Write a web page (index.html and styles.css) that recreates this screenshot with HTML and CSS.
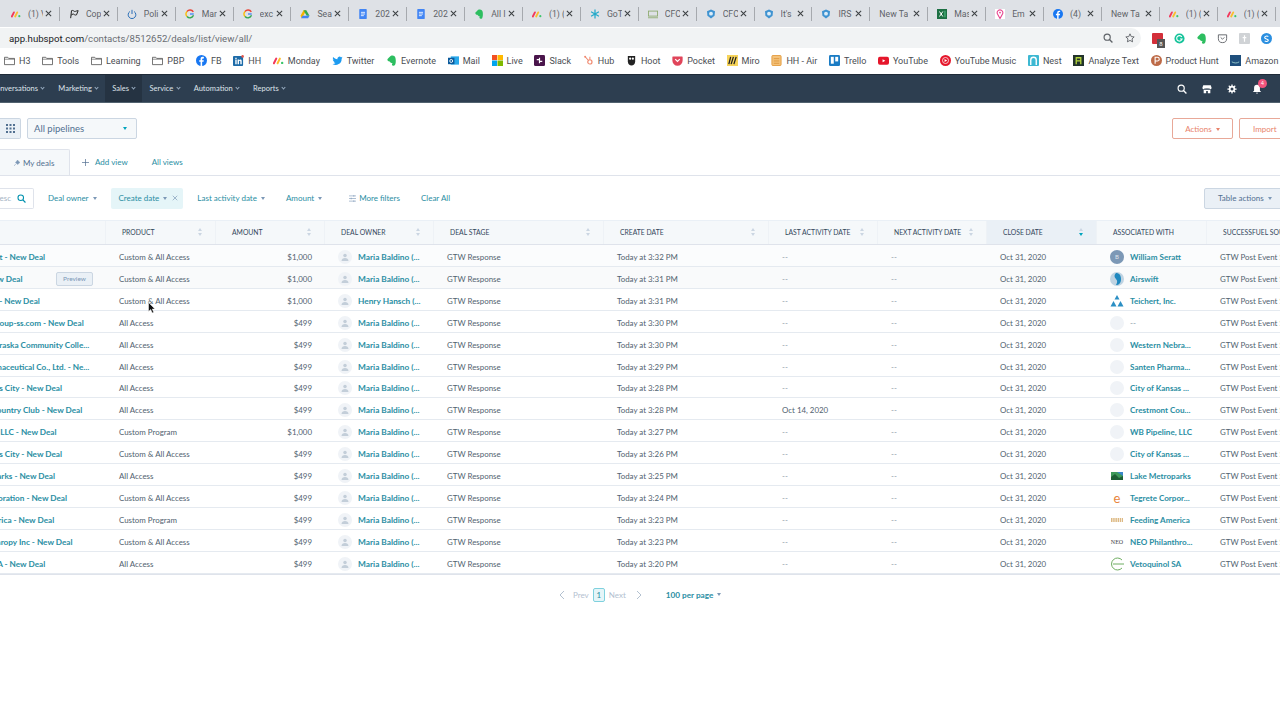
FILE: index.html
```html
<!DOCTYPE html>
<html lang="en">
<head>
    <meta charset="UTF-8">
    <title>Deals | HubSpot</title>
    <link rel="stylesheet" href="styles.css">
</head>
<body>
    <!-- shared icons -->
    <svg class="sprite" width="0" height="0">
        <symbol id="i-monday" viewBox="0 0 12 12"><path d="M1 9 3.5 4" stroke="#f2385c" stroke-width="2.2" stroke-linecap="round"/><path d="M5 9 7.5 4" stroke="#fcbe2c" stroke-width="2.2" stroke-linecap="round"/><circle cx="10" cy="8.6" r="1.3" fill="#3cc66b"/></symbol>
        <symbol id="i-flag" viewBox="0 0 12 12"><path d="M2 11 3 2c2-1 3 1 4 1s2-1 4-1L9 7C7 8 6 6 5 6S3 7 2.6 7.5" fill="none" stroke="#222" stroke-width="1.2"/></symbol>
        <symbol id="i-power" viewBox="0 0 12 12"><path d="M3.5 3a4.6 4.6 0 1 0 5 0M6 1v5" fill="none" stroke="#2b6fb8" stroke-width="1.2"/></symbol>
        <symbol id="i-google" viewBox="0 0 12 12"><path d="M10.5 6H6" stroke="#4285f4" stroke-width="1.6"/><path d="M10 3.4A4.6 4.6 0 0 0 2.4 3" fill="none" stroke="#ea4335" stroke-width="1.6"/><path d="M2.4 3a4.6 4.6 0 0 0 0 6" fill="none" stroke="#fbbc05" stroke-width="1.6"/><path d="M2.4 9a4.6 4.6 0 0 0 7.8-1.4" fill="none" stroke="#34a853" stroke-width="1.6"/></symbol>
        <symbol id="i-drive" viewBox="0 0 12 12"><path d="M4.2 1.5h3.4L4 8 2.2 11 .6 8z" fill="#f5b400"/><path d="M7.6 1.5 11.4 8H8L4.2 1.5z" fill="#34a853"/><path d="M3 8h8.4l-1.7 3H1.3z" fill="#4285f4"/></symbol>
        <symbol id="i-docs" viewBox="0 0 12 12"><rect x="1.5" width="9" height="12" rx="1" fill="#4285f4"/><path d="M3.5 4h5M3.5 6h5M3.5 8h3.5" stroke="#fff"/></symbol>
        <symbol id="i-evernote" viewBox="0 0 12 12"><path d="M3 3 5 1c3-1 5 0 5.5 3 .3 2.5.3 5-.7 7-1 1-3 .8-3.3-.4-.2-1 .8-1.6 1.5-1.2C6 9 4.5 8 4 7 2.5 7 1.5 6 1.5 4.5z" fill="#2dbe60"/></symbol>
        <symbol id="i-snow" viewBox="0 0 12 12"><path d="M6 .5v11M1.3 3.2l9.4 5.600M10.700 3.200l-9.400 5.600" stroke="#25a9c9" stroke-width="1.5"/></symbol>
        <symbol id="i-shield" viewBox="0 0 12 12"><path d="M6 .5 10.800 2.600 10.300 8 6 11.500 1.700 8 1.200 2.600z" fill="#3f93d1"/><circle cx="6" cy="5.600" r="2.300" fill="#dcedf8"/></symbol>
        <symbol id="i-cfo" viewBox="0 0 12 12"><rect x=".5" y="2.500" width="11" height="6" fill="none" stroke="#8aa86a"/><path d="M0 10.500h12" stroke="#8aa86a"/></symbol>
        <symbol id="i-excel" viewBox="0 0 12 12"><rect width="12" height="12" fill="#1d7044"/><path d="m3 3 4 6M7 3 3 9" stroke="#fff" stroke-width="1.2"/><path d="M8.500 2h2v8h-2z" fill="#3ea16d"/></symbol>
        <symbol id="i-pin" viewBox="0 0 12 12"><rect width="12" height="12" fill="#fff"/><path d="M6 11.500 3 6a3.400 3.400 0 1 1 6 0z" fill="none" stroke="#e8448f" stroke-width="1.3"/><circle cx="6" cy="4.300" r="1.100" fill="#e8448f"/></symbol>
        <symbol id="i-fb" viewBox="0 0 12 12"><circle cx="6" cy="6" r="6" fill="#1877f2"/><path d="M6.700 12V7.400h1.500l.3-1.700H6.700v-1c0-.6.300-1 1-1h.9V2.200C8 2.100 7.600 2 7.200 2 5.800 2 5 2.900 5 4.400v1.300H3.500v1.700H5V12z" fill="#fff"/></symbol>
        <symbol id="i-folder" viewBox="0 0 12 10"><path d="M.5 1.500h3.600l1 1.200h6.400v6.800H.5z" fill="none" stroke="#555" stroke-width=".9"/><path d="M.5 3.600h11" stroke="#555" stroke-width=".7"/></symbol>
        <symbol id="i-linkedin" viewBox="0 0 12 12"><rect width="11" height="11" y="1" rx="1" fill="#1d6ba8"/><path d="M2.500 5h1.500v5H2.500zM2.500 3h1.500v1.300H2.500zM5 5h1.500v.8c.8-1.200 3-1.200 3 .8V10H8V7c0-1-1.500-1-1.500 0v3H5z" fill="#fff"/><circle cx="10.500" cy="1.500" r="1.400" fill="#e2574c"/></symbol>
        <symbol id="i-twitter" viewBox="0 0 12 12"><path d="M11.500 2.800c-.4.200-.9.300-1.300.4.500-.3.800-.7 1-1.300-.4.300-.9.500-1.400.6a2.300 2.300 0 0 0-3.900 2.100C4 4.500 2.300 3.600 1.200 2.200c-.6 1-.3 2.300.7 3-.4 0-.7-.1-1-.3 0 1.100.8 2.100 1.800 2.300-.3.100-.7.100-1 0 .3.900 1.100 1.600 2.100 1.600A4.600 4.600 0 0 1 .5 9.800a6.500 6.500 0 0 0 10-5.800c.4-.3.800-.7 1-1.200z" fill="#1d9bf0"/></symbol>
        <symbol id="i-mail" viewBox="0 0 12 12"><rect x="3" y="1.500" width="9" height="9" fill="#28a8ea"/><rect y="3" width="7" height="7" fill="#0a5a9c"/><circle cx="3.500" cy="6.500" r="1.600" fill="none" stroke="#fff"/></symbol>
        <symbol id="i-live" viewBox="0 0 12 12"><rect width="5.500" height="5.500" fill="#f25022"/><rect x="6" width="6" height="5.500" fill="#ffb900"/><rect y="6" width="5.500" height="6" fill="#00a4ef"/><rect x="6" y="6" width="6" height="6" fill="#7fba00"/></symbol>
        <symbol id="i-slack" viewBox="0 0 12 12"><rect width="12" height="12" rx="1.500" fill="#4a154b"/><path d="M3 5h3M6 3v3M9 7H6M6 9V6" stroke="#fff" stroke-width="1.3"/></symbol>
        <symbol id="i-hub" viewBox="0 0 12 12"><circle cx="7.500" cy="7.500" r="2.300" fill="none" stroke="#f08a70" stroke-width="1.3"/><path d="M2.500 2 6 6M7.500 5V2" stroke="#f08a70" stroke-width="1.1"/><circle cx="2.300" cy="1.800" r="1.100" fill="#f08a70"/></symbol>
        <symbol id="i-hoot" viewBox="0 0 12 12"><path d="M2 1h8v6c0 3-2 4.500-4 4.500S2 10 2 7z" fill="#222"/><circle cx="4.500" cy="4" r="1.200" fill="#fff"/><circle cx="7.500" cy="4" r="1.200" fill="#fff"/></symbol>
        <symbol id="i-pocket" viewBox="0 0 12 12"><path d="M1 1.500h10a.6.600 0 0 1 .6.600V6a5.600 5.600 0 0 1-11.200 0V2.100a.6.600 0 0 1 .6-.6z" fill="#e0455a"/><path d="M3.500 4.500 6 7l2.500-2.500" fill="none" stroke="#fff" stroke-width="1.4"/></symbol>
        <symbol id="i-miro" viewBox="0 0 12 12"><rect width="12" height="12" fill="#f7d45a"/><path d="M4 2 2 10M7 2 4.500 10M10 2 7.500 10" stroke="#222" stroke-width="1.4"/></symbol>
        <symbol id="i-air" viewBox="0 0 12 12"><rect x="1" y=".5" width="10" height="11" rx="1" fill="#f4c27a" stroke="#e29a3c"/><path d="M3 4h6M3 6.500h6M3 9h6" stroke="#d98a2b" stroke-width=".8"/></symbol>
        <symbol id="i-trello" viewBox="0 0 12 12"><rect width="12" height="12" rx="1.500" fill="#1b7cc4"/><rect x="2" y="2" width="3.200" height="7.500" fill="#fff"/><rect x="6.800" y="2" width="3.200" height="5" fill="#fff"/></symbol>
        <symbol id="i-youtube" viewBox="0 0 12 12"><rect y="2" width="12" height="8.500" rx="2" fill="#e5162b"/><path d="M5 4.500v3.500l3-1.750z" fill="#fff"/></symbol>
        <symbol id="i-ytm" viewBox="0 0 12 12"><circle cx="6" cy="6" r="6" fill="#e5162b"/><circle cx="6" cy="6" r="3.300" fill="none" stroke="#fff" stroke-width=".8"/><path d="M5 4.300v3.400L7.800 6z" fill="#fff"/></symbol>
        <symbol id="i-nest" viewBox="0 0 12 12"><rect width="12" height="12" rx="1" fill="#3db8d2"/><path d="M3 11V5.500a3 3 0 0 1 6 0V11" fill="none" stroke="#fff" stroke-width="1.5"/></symbol>
        <symbol id="i-analyze" viewBox="0 0 12 12"><rect width="12" height="12" fill="#22332c"/><path d="M3.500 10V3h5v7M3.500 6.500h5" fill="none" stroke="#b5d63b" stroke-width="1.4"/></symbol>
        <symbol id="i-ph" viewBox="0 0 12 12"><circle cx="6" cy="6" r="6" fill="#bd6a47"/><path d="M4.500 9.500v-7H7a2 2 0 0 1 0 4H4.500" fill="none" stroke="#fff" stroke-width="1.2"/></symbol>
        <symbol id="i-amazon" viewBox="0 0 12 12"><rect width="12" height="12" fill="#1f4f7c"/><path d="M2 7.500c3 1.600 5.500 1.600 8 0" fill="none" stroke="#9cc" stroke-width="1"/></symbol>
        <symbol id="i-close" viewBox="0 0 8 8"><path d="m1 1 6 6M7 1 1 7" stroke="#3c4043" stroke-width="1.2"/></symbol>
        <symbol id="i-person" viewBox="0 0 16 16"><circle cx="8" cy="8" r="8" fill="#f0f3f7"/><circle cx="8" cy="6.300" r="2" fill="#c3ced9"/><path d="M4 12.500c0-2.500 1.800-3.500 4-3.500s4 1 4 3.500z" fill="#c3ced9"/></symbol>
        <symbol id="i-search" viewBox="0 0 12 12"><circle cx="5" cy="5" r="3.700" fill="none" stroke="currentColor" stroke-width="1.4"/><path d="m7.800 7.800 3.500 3.500" stroke="currentColor" stroke-width="1.6"/></symbol>
    </svg>

    <div class="tabstrip">
        <div class="tab"><svg class="tab-icon"><use href="#i-monday"/></svg><span class="tab-title">(1) V</span><svg class="tab-x"><use href="#i-close"/></svg></div>
        <div class="tab"><svg class="tab-icon"><use href="#i-flag"/></svg><span class="tab-title">Cop</span><svg class="tab-x"><use href="#i-close"/></svg></div>
        <div class="tab"><svg class="tab-icon"><use href="#i-power"/></svg><span class="tab-title">Poli</span><svg class="tab-x"><use href="#i-close"/></svg></div>
        <div class="tab"><svg class="tab-icon"><use href="#i-google"/></svg><span class="tab-title">Mar</span><svg class="tab-x"><use href="#i-close"/></svg></div>
        <div class="tab"><svg class="tab-icon"><use href="#i-google"/></svg><span class="tab-title">exc</span><svg class="tab-x"><use href="#i-close"/></svg></div>
        <div class="tab"><svg class="tab-icon"><use href="#i-drive"/></svg><span class="tab-title">Sea</span><svg class="tab-x"><use href="#i-close"/></svg></div>
        <div class="tab"><svg class="tab-icon"><use href="#i-docs"/></svg><span class="tab-title">202</span><svg class="tab-x"><use href="#i-close"/></svg></div>
        <div class="tab"><svg class="tab-icon"><use href="#i-docs"/></svg><span class="tab-title">202</span><svg class="tab-x"><use href="#i-close"/></svg></div>
        <div class="tab"><svg class="tab-icon"><use href="#i-evernote"/></svg><span class="tab-title">All I</span><svg class="tab-x"><use href="#i-close"/></svg></div>
        <div class="tab"><svg class="tab-icon"><use href="#i-monday"/></svg><span class="tab-title">(1) (</span><svg class="tab-x"><use href="#i-close"/></svg></div>
        <div class="tab"><svg class="tab-icon"><use href="#i-snow"/></svg><span class="tab-title">GoT</span><svg class="tab-x"><use href="#i-close"/></svg></div>
        <div class="tab"><svg class="tab-icon"><use href="#i-cfo"/></svg><span class="tab-title">CFC</span><svg class="tab-x"><use href="#i-close"/></svg></div>
        <div class="tab"><svg class="tab-icon"><use href="#i-shield"/></svg><span class="tab-title">CFC</span><svg class="tab-x"><use href="#i-close"/></svg></div>
        <div class="tab"><svg class="tab-icon"><use href="#i-shield"/></svg><span class="tab-title">It's</span><svg class="tab-x"><use href="#i-close"/></svg></div>
        <div class="tab"><svg class="tab-icon"><use href="#i-shield"/></svg><span class="tab-title">IRS</span><svg class="tab-x"><use href="#i-close"/></svg></div>
        <div class="tab"><span class="tab-title tab-wide">New Tal</span><svg class="tab-x"><use href="#i-close"/></svg></div>
        <div class="tab"><svg class="tab-icon"><use href="#i-excel"/></svg><span class="tab-title">Mas</span><svg class="tab-x"><use href="#i-close"/></svg></div>
        <div class="tab"><svg class="tab-icon"><use href="#i-pin"/></svg><span class="tab-title">Em</span><svg class="tab-x"><use href="#i-close"/></svg></div>
        <div class="tab"><svg class="tab-icon"><use href="#i-fb"/></svg><span class="tab-title">(4)</span><svg class="tab-x"><use href="#i-close"/></svg></div>
        <div class="tab"><span class="tab-title tab-wide">New Tal</span><svg class="tab-x"><use href="#i-close"/></svg></div>
        <div class="tab"><svg class="tab-icon"><use href="#i-monday"/></svg><span class="tab-title">(1) (</span><svg class="tab-x"><use href="#i-close"/></svg></div>
        <div class="tab"><svg class="tab-icon"><use href="#i-monday"/></svg><span class="tab-title">(1) (</span><svg class="tab-x"><use href="#i-close"/></svg></div>
    </div>

    <div class="toolbar">
        <div class="omnibox">
            <span class="url"><b>app.hubspot.com</b>/contacts/8512652/deals/list/view/all/</span>
            <svg class="omni-icon zoom-glass" viewBox="0 0 12 12"><use href="#i-search"/></svg>
            <svg class="omni-icon" viewBox="0 0 12 12"><path d="m6 1 1.500 3.300 3.500.4-2.600 2.400.7 3.500L6 8.900l-3.100 1.700.7-3.500L1 4.700l3.500-.4z" fill="none" stroke="#5f6368" stroke-width="1.1"/></svg>
        </div>
        <div class="extensions">
            <span class="ext-cal"><span class="ext-count">8</span></span>
            <svg class="ext" viewBox="0 0 12 12"><circle cx="6" cy="6" r="5.500" fill="#15c39a"/><path d="M8.500 4.200a3 3 0 1 0 .4 2.300H6.500" fill="none" stroke="#fff" stroke-width="1.2"/></svg>
            <svg class="ext"><use href="#i-evernote"/></svg>
            <svg class="ext" viewBox="0 0 12 12"><path d="M1.500 2h9v4a4.500 4.500 0 0 1-9 0z" fill="none" stroke="#5f6368" stroke-width="1"/><path d="M4 4.800 6 6.800l2-2" fill="none" stroke="#5f6368"/></svg>
            <svg class="ext" viewBox="0 0 12 12"><rect width="12" height="12" rx="1" fill="#d0d3d6"/><path d="M6 2.500v7M4 5h4" stroke="#fff" stroke-width="1.3"/></svg>
            <svg class="ext" viewBox="0 0 12 12"><circle cx="6" cy="6" r="6" fill="#2b8fe0"/><path d="M8 3.800C6.500 2.800 4 3.500 4 5c0 2 4 1 4 3 0 1.200-2.500 1.800-4 .6" fill="none" stroke="#fff" stroke-width="1.2"/></svg>
        </div>
    </div>

    <div class="bookmarks">
        <a class="bm"><svg class="bm-icon"><use href="#i-folder"/></svg>H3</a>
        <a class="bm"><svg class="bm-icon"><use href="#i-folder"/></svg>Tools</a>
        <a class="bm"><svg class="bm-icon"><use href="#i-folder"/></svg>Learning</a>
        <a class="bm"><svg class="bm-icon"><use href="#i-folder"/></svg>PBP</a>
        <a class="bm"><svg class="bm-icon"><use href="#i-fb"/></svg>FB</a>
        <a class="bm"><svg class="bm-icon"><use href="#i-linkedin"/></svg>HH</a>
        <a class="bm"><svg class="bm-icon"><use href="#i-monday"/></svg>Monday</a>
        <a class="bm"><svg class="bm-icon"><use href="#i-twitter"/></svg>Twitter</a>
        <a class="bm"><svg class="bm-icon"><use href="#i-evernote"/></svg>Evernote</a>
        <a class="bm"><svg class="bm-icon"><use href="#i-mail"/></svg>Mail</a>
        <a class="bm"><svg class="bm-icon"><use href="#i-live"/></svg>Live</a>
        <a class="bm"><svg class="bm-icon"><use href="#i-slack"/></svg>Slack</a>
        <a class="bm"><svg class="bm-icon"><use href="#i-hub"/></svg>Hub</a>
        <a class="bm"><svg class="bm-icon"><use href="#i-hoot"/></svg>Hoot</a>
        <a class="bm"><svg class="bm-icon"><use href="#i-pocket"/></svg>Pocket</a>
        <a class="bm"><svg class="bm-icon"><use href="#i-miro"/></svg>Miro</a>
        <a class="bm"><svg class="bm-icon"><use href="#i-air"/></svg>HH - Air</a>
        <a class="bm"><svg class="bm-icon"><use href="#i-trello"/></svg>Trello</a>
        <a class="bm"><svg class="bm-icon"><use href="#i-youtube"/></svg>YouTube</a>
        <a class="bm"><svg class="bm-icon"><use href="#i-ytm"/></svg>YouTube Music</a>
        <a class="bm"><svg class="bm-icon"><use href="#i-nest"/></svg>Nest</a>
        <a class="bm"><svg class="bm-icon"><use href="#i-analyze"/></svg>Analyze Text</a>
        <a class="bm"><svg class="bm-icon"><use href="#i-ph"/></svg>Product Hunt</a>
        <a class="bm"><svg class="bm-icon"><use href="#i-amazon"/></svg>Amazon Music</a>
    </div>

    <nav class="topnav">
        <a class="nav-item nav-first">Conversations<i class="chev"></i></a>
        <a class="nav-item">Marketing<i class="chev"></i></a>
        <a class="nav-item active">Sales<i class="chev"></i></a>
        <a class="nav-item">Service<i class="chev"></i></a>
        <a class="nav-item">Automation<i class="chev"></i></a>
        <a class="nav-item">Reports<i class="chev"></i></a>
        <div class="nav-right">
            <svg class="nav-icon" viewBox="0 0 12 12"><use href="#i-search"/></svg>
            <svg class="nav-icon" viewBox="0 0 12 12"><path d="M1.500 1.500h9l1 3a1.500 1.500 0 0 1-3 .3 1.500 1.500 0 0 1-2.500 0 1.500 1.500 0 0 1-2.500 0 1.500 1.500 0 0 1-3-.3zM2 7h8v4H7V8.500H5V11H2z" fill="#fff"/></svg>
            <svg class="nav-icon" viewBox="0 0 12 12"><circle cx="6" cy="6" r="2.800" fill="none" stroke="#fff" stroke-width="2"/><path d="M6 .5v2M6 9.500v2M.5 6h2M9.500 6h2M2.100 2.100l1.400 1.400M8.500 8.500l1.400 1.400M9.900 2.100 8.500 3.500M3.500 8.500l-1.400 1.400" stroke="#fff" stroke-width="1.5"/></svg>
            <span class="bell">
                <svg class="nav-icon" viewBox="0 0 12 12"><path d="M6 1a3.500 3.500 0 0 0-3.500 3.500V8L1 9.500h10L9.500 8V4.500A3.500 3.500 0 0 0 6 1zM4.800 10.500h2.400L6 12z" fill="#fff"/></svg>
                <span class="badge">4</span>
            </span>
        </div>
    </nav>

    <main class="content">
        <div class="pipeline-row">
            <div class="pipeline-left">
                <button class="grid-btn"><svg viewBox="0 0 9 9" width="9" height="9"><path d="M0 0h2v2H0zM3.500 0h2v2h-2zM7 0h2v2H7zM0 3.500h2v2H0zM3.500 3.500h2v2h-2zM7 3.500h2v2H7zM0 7h2v2H0zM3.500 7h2v2h-2zM7 7h2v2H7z" fill="#516f90"/></svg></button>
                <div class="pipeline-select">All pipelines<i class="caret teal"></i></div>
            </div>
            <div class="pipeline-right">
                <button class="btn-outline">Actions<i class="caret orange"></i></button>
                <button class="btn-outline btn-import">Import</button>
            </div>
        </div>

        <div class="view-tabs">
            <div class="view-tab"><svg viewBox="0 0 8 8" width="6" height="6"><path d="M4.500 0 8 3.500 6.500 4 5 6 2 3 4 1.500zM2.800 4.800 0 8" fill="#7c98b6" stroke="#7c98b6" stroke-width=".7"/></svg>My deals</div>
            <a class="view-link add-view"><svg viewBox="0 0 8 8" width="7" height="7"><path d="M4 0v8M0 4h8" stroke="#516f90" stroke-width=".8"/></svg>Add view</a>
            <a class="view-link">All views</a>
        </div>

        <div class="filters">
            <div class="search-box"><span class="search-text">Search name or desc</span><svg class="search-icon" viewBox="0 0 12 12"><use href="#i-search"/></svg></div>
            <a class="filter f-owner">Deal owner<i class="caret grey"></i></a>
            <a class="filter filter-on">Create date<i class="caret grey"></i><svg class="chip-x" viewBox="0 0 8 8"><path d="m1 1 6 6M7 1 1 7" stroke="#7c98b6" stroke-width=".9"/></svg></a>
            <a class="filter f-activity">Last activity date<i class="caret grey"></i></a>
            <a class="filter f-amount">Amount<i class="caret grey"></i></a>
            <a class="filter f-more"><svg viewBox="0 0 8 8" width="7" height="7"><path d="M0 1h8M0 4h8M0 7h8M5.500 0v2M2.500 3v2M5.500 6v2" stroke="#7c98b6" stroke-width=".7"/></svg>More filters</a>
            <a class="filter">Clear All</a>
            <button class="table-actions">Table actions<i class="caret grey"></i></button>
        </div>

        <div class="deals">
            <div class="row head">
                <div class="th">Deal name</div>
                <div class="th">Product<i class="sort"></i></div>
                <div class="th">Amount<i class="sort"></i></div>
                <div class="th">Deal owner<i class="sort"></i></div>
                <div class="th">Deal stage<i class="sort"></i></div>
                <div class="th">Create date<i class="sort"></i></div>
                <div class="th">Last activity date<i class="sort"></i></div>
                <div class="th">Next activity date<i class="sort"></i></div>
                <div class="th th-sorted">Close date<i class="sort sort-down"></i></div>
                <div class="th">Associated with</div>
                <div class="th">Successfuel Source</div>
            </div>

            <div class="row row-first">
                <div class="td name">William Seratt - New Deal</div><div class="td">Custom &amp; All Access</div><div class="td amount">$1,000</div>
                <div class="td owner"><svg class="avatar"><use href="#i-person"/></svg><span class="link">Maria Baldino (...</span></div>
                <div class="td">GTW Response</div><div class="td">Today at 3:32 PM</div><div class="td muted">--</div><div class="td muted">--</div><div class="td">Oct 31, 2020</div>
                <div class="td assoc"><span class="logo logo-b">B</span><span class="link">William Seratt</span></div>
                <div class="td">GTW Post Event Survey</div>
            </div>
            <div class="row row-hover">
                <div class="td name">Airswift - New Deal<span class="preview">Preview</span></div><div class="td">Custom &amp; All Access</div><div class="td amount">$1,000</div>
                <div class="td owner"><svg class="avatar"><use href="#i-person"/></svg><span class="link">Maria Baldino (...</span></div>
                <div class="td">GTW Response</div><div class="td">Today at 3:31 PM</div><div class="td muted">--</div><div class="td muted">--</div><div class="td">Oct 31, 2020</div>
                <div class="td assoc"><svg class="logo" viewBox="0 0 14 14"><circle cx="7" cy="7" r="7" fill="#bfd3e2"/><path d="M6 1c-2 2-2 4 0 6s1 4 0 6c3 0 5-2 5-6S9 1 6 1z" fill="#1f88bf"/></svg><span class="link">Airswift</span></div>
                <div class="td">GTW Post Event Survey</div>
            </div>
            <div class="row">
                <div class="td name">Teichert, Inc. - New Deal</div><div class="td">Custom &amp; All Access</div><div class="td amount">$1,000</div>
                <div class="td owner"><svg class="avatar"><use href="#i-person"/></svg><span class="link">Henry Hansch (...</span></div>
                <div class="td">GTW Response</div><div class="td">Today at 3:31 PM</div><div class="td muted">--</div><div class="td muted">--</div><div class="td">Oct 31, 2020</div>
                <div class="td assoc"><svg class="logo" viewBox="0 0 14 14"><path d="M7 1 9.500 5.500h-5zM3.500 7 6.500 12.500H.5zM10.500 7 13.500 12.500H7.500z" fill="#2b8fc4"/></svg><span class="link">Teichert, Inc.</span></div>
                <div class="td">GTW Post Event Survey</div>
            </div>
            <div class="row">
                <div class="td name">Woodlandsgroup-ss.com - New Deal</div><div class="td">All Access</div><div class="td amount">$499</div>
                <div class="td owner"><svg class="avatar"><use href="#i-person"/></svg><span class="link">Maria Baldino (...</span></div>
                <div class="td">GTW Response</div><div class="td">Today at 3:30 PM</div><div class="td muted">--</div><div class="td muted">--</div><div class="td">Oct 31, 2020</div>
                <div class="td assoc"><span class="logo logo-blank"></span><span class="link muted">--</span></div>
                <div class="td">GTW Post Event Survey</div>
            </div>
            <div class="row">
                <div class="td name">Western Nebraska Community Colle...</div><div class="td">All Access</div><div class="td amount">$499</div>
                <div class="td owner"><svg class="avatar"><use href="#i-person"/></svg><span class="link">Maria Baldino (...</span></div>
                <div class="td">GTW Response</div><div class="td">Today at 3:30 PM</div><div class="td muted">--</div><div class="td muted">--</div><div class="td">Oct 31, 2020</div>
                <div class="td assoc"><span class="logo logo-blank"></span><span class="link">Western Nebra...</span></div>
                <div class="td">GTW Post Event Survey</div>
            </div>
            <div class="row">
                <div class="td name">Santen Pharmaceutical Co., Ltd. - Ne...</div><div class="td">All Access</div><div class="td amount">$499</div>
                <div class="td owner"><svg class="avatar"><use href="#i-person"/></svg><span class="link">Maria Baldino (...</span></div>
                <div class="td">GTW Response</div><div class="td">Today at 3:29 PM</div><div class="td muted">--</div><div class="td muted">--</div><div class="td">Oct 31, 2020</div>
                <div class="td assoc"><span class="logo logo-blank"></span><span class="link">Santen Pharma...</span></div>
                <div class="td">GTW Post Event Survey</div>
            </div>
            <div class="row">
                <div class="td name">City of Kansas City - New Deal</div><div class="td">All Access</div><div class="td amount">$499</div>
                <div class="td owner"><svg class="avatar"><use href="#i-person"/></svg><span class="link">Maria Baldino (...</span></div>
                <div class="td">GTW Response</div><div class="td">Today at 3:28 PM</div><div class="td muted">--</div><div class="td muted">--</div><div class="td">Oct 31, 2020</div>
                <div class="td assoc"><span class="logo logo-blank"></span><span class="link">City of Kansas ...</span></div>
                <div class="td">GTW Post Event Survey</div>
            </div>
            <div class="row">
                <div class="td name">Crestmont Country Club - New Deal</div><div class="td">All Access</div><div class="td amount">$499</div>
                <div class="td owner"><svg class="avatar"><use href="#i-person"/></svg><span class="link">Maria Baldino (...</span></div>
                <div class="td">GTW Response</div><div class="td">Today at 3:28 PM</div><div class="td">Oct 14, 2020</div><div class="td muted">--</div><div class="td">Oct 31, 2020</div>
                <div class="td assoc"><span class="logo logo-blank"></span><span class="link">Crestmont Cou...</span></div>
                <div class="td">GTW Post Event Survey</div>
            </div>
            <div class="row">
                <div class="td name">WB Pipeline, LLC - New Deal</div><div class="td">Custom Program</div><div class="td amount">$1,000</div>
                <div class="td owner"><svg class="avatar"><use href="#i-person"/></svg><span class="link">Maria Baldino (...</span></div>
                <div class="td">GTW Response</div><div class="td">Today at 3:27 PM</div><div class="td muted">--</div><div class="td muted">--</div><div class="td">Oct 31, 2020</div>
                <div class="td assoc"><span class="logo logo-blank"></span><span class="link">WB Pipeline, LLC</span></div>
                <div class="td">GTW Post Event Survey</div>
            </div>
            <div class="row">
                <div class="td name">City of Kansas City - New Deal</div><div class="td">Custom &amp; All Access</div><div class="td amount">$499</div>
                <div class="td owner"><svg class="avatar"><use href="#i-person"/></svg><span class="link">Maria Baldino (...</span></div>
                <div class="td">GTW Response</div><div class="td">Today at 3:26 PM</div><div class="td muted">--</div><div class="td muted">--</div><div class="td">Oct 31, 2020</div>
                <div class="td assoc"><span class="logo logo-blank"></span><span class="link">City of Kansas ...</span></div>
                <div class="td">GTW Post Event Survey</div>
            </div>
            <div class="row">
                <div class="td name">Lake Metroparks - New Deal</div><div class="td">All Access</div><div class="td amount">$499</div>
                <div class="td owner"><svg class="avatar"><use href="#i-person"/></svg><span class="link">Maria Baldino (...</span></div>
                <div class="td">GTW Response</div><div class="td">Today at 3:25 PM</div><div class="td muted">--</div><div class="td muted">--</div><div class="td">Oct 31, 2020</div>
                <div class="td assoc"><svg class="logo" viewBox="0 0 14 14"><path d="M1 3h12v8H1z" fill="#3f9a5a"/><path d="M7 3h6v4z" fill="#3a87c8"/><path d="M1 8l4-3 4 4 4-2v4H1z" fill="#1d5f35"/></svg><span class="link">Lake Metroparks</span></div>
                <div class="td">GTW Post Event Survey</div>
            </div>
            <div class="row">
                <div class="td name">Tegrete Corporation - New Deal</div><div class="td">Custom &amp; All Access</div><div class="td amount">$499</div>
                <div class="td owner"><svg class="avatar"><use href="#i-person"/></svg><span class="link">Maria Baldino (...</span></div>
                <div class="td">GTW Response</div><div class="td">Today at 3:24 PM</div><div class="td muted">--</div><div class="td muted">--</div><div class="td">Oct 31, 2020</div>
                <div class="td assoc"><span class="logo logo-e">e</span><span class="link">Tegrete Corpor...</span></div>
                <div class="td">GTW Post Event Survey</div>
            </div>
            <div class="row">
                <div class="td name">Feeding America - New Deal</div><div class="td">Custom Program</div><div class="td amount">$499</div>
                <div class="td owner"><svg class="avatar"><use href="#i-person"/></svg><span class="link">Maria Baldino (...</span></div>
                <div class="td">GTW Response</div><div class="td">Today at 3:23 PM</div><div class="td muted">--</div><div class="td muted">--</div><div class="td">Oct 31, 2020</div>
                <div class="td assoc"><svg class="logo" viewBox="0 0 14 14"><path d="M1 6h12M1 8h12" stroke="#d2a35c" stroke-width="1.3" stroke-dasharray="1.500 .7"/></svg><span class="link">Feeding America</span></div>
                <div class="td">GTW Post Event Survey</div>
            </div>
            <div class="row">
                <div class="td name">NEO Philanthropy Inc - New Deal</div><div class="td">Custom &amp; All Access</div><div class="td amount">$499</div>
                <div class="td owner"><svg class="avatar"><use href="#i-person"/></svg><span class="link">Maria Baldino (...</span></div>
                <div class="td">GTW Response</div><div class="td">Today at 3:23 PM</div><div class="td muted">--</div><div class="td muted">--</div><div class="td">Oct 31, 2020</div>
                <div class="td assoc"><span class="logo logo-neo">NEO</span><span class="link">NEO Philanthro...</span></div>
                <div class="td">GTW Post Event Survey</div>
            </div>
            <div class="row">
                <div class="td name">Vetoquinol SA - New Deal</div><div class="td">All Access</div><div class="td amount">$499</div>
                <div class="td owner"><svg class="avatar"><use href="#i-person"/></svg><span class="link">Maria Baldino (...</span></div>
                <div class="td">GTW Response</div><div class="td">Today at 3:20 PM</div><div class="td muted">--</div><div class="td muted">--</div><div class="td">Oct 31, 2020</div>
                <div class="td assoc"><svg class="logo" viewBox="0 0 14 14"><path d="M12 3a6 6 0 1 0 0 8" fill="none" stroke="#6fae62" stroke-width="1"/><path d="M3 7h11" stroke="#6fae62"/></svg><span class="link">Vetoquinol SA</span></div>
                <div class="td">GTW Post Event Survey</div>
            </div>
        </div>

        <div class="pager">
            <svg class="pager-arrow" viewBox="0 0 6 10"><path d="M5 1 1 5l4 4" fill="none" stroke="#b3c1d0"/></svg>
            <span class="pager-off">Prev</span>
            <span class="pager-num">1</span>
            <span class="pager-off pager-next">Next</span>
            <svg class="pager-arrow" viewBox="0 0 6 10"><path d="m1 1 4 4-4 4" fill="none" stroke="#b3c1d0"/></svg>
            <a class="per-page">100 per page<i class="caret grey"></i></a>
        </div>
    </main>

    <svg class="cursor" viewBox="0 0 8 12" width="8" height="12"><path d="M.5.500v9l2.200-2 1.500 3.500 1.500-.7L4.300 7H7z" fill="#111" stroke="#fff" stroke-width=".5"/></svg>
</body>
</html>
```

FILE: styles.css
```css
* {
    box-sizing: border-box;
}
html, body {
    margin: 0;
    height: 720px;
    overflow: hidden;
}
body {
    width: 1280px;
    background-color: white;
    font-family: Lato, "Open Sans", sans-serif;
    font-size: 9px;
    color: #51626f;
    position: relative;
}
button {
    font-family: inherit;
}
.sprite {
    position: absolute;
}

/* browser chrome */
.tabstrip {
    height: 27px;
    background-color: #dee1e6;
    display: flex;
    padding-left: 2px;
    align-items: center;
    overflow: hidden;
    font-family: Roboto, sans-serif;
}
.tab {
    flex: 0 0 57.9px;
    height: 14px;
    display: flex;
    align-items: center;
    padding-left: 9px;
    border-right: 1px solid #a6a9ae;
    position: relative;
    color: #5f6368;
    font-size: 8.7px;
}
.tab-icon {
    width: 10px;
    height: 10px;
    margin-right: 7px;
    flex: none;
}
.tab-title {
    white-space: nowrap;
    overflow: hidden;
    width: 15px;
}
.tab-wide {
    width: 29px;
}
.tab-x {
    position: absolute;
    right: 7px;
    top: 3px;
    width: 7px;
    height: 7px;
}
.toolbar {
    height: 22px;
    background-color: #fff;
    display: flex;
    align-items: center;
    font-family: Roboto, sans-serif;
}
.omnibox {
    width: 1141px;
    height: 20px;
    background-color: #f1f3f4;
    border-radius: 0 10px 10px 0;
    display: flex;
    align-items: center;
    padding-left: 9px;
    padding-right: 6px;
    gap: 12px;
}
.url {
    flex: 1;
    font-size: 9.65px;
    color: #6a6e73;
}
.url b {
    font-weight: 400;
    color: #202124;
}
.omni-icon {
    width: 10px;
    height: 10px;
    color: #5f6368;
}
.extensions {
    display: flex;
    align-items: center;
    gap: 10.8px;
    margin-left: 11px;
}
.ext {
    width: 11px;
    height: 11px;
}
.ext-cal {
    width: 11px;
    height: 11px;
    background-color: #d32f3a;
    border-radius: 1px;
    position: relative;
}
.ext-count {
    position: absolute;
    left: 5px;
    top: 6px;
    width: 8px;
    height: 9px;
    background-color: #555;
    color: #fff;
    font-size: 6px;
    line-height: 9px;
    text-align: center;
}
.bookmarks {
    height: 25px;
    background-color: #fff;
    display: flex;
    align-items: center;
    padding: 0 0 2px 4px;
    gap: 11.7px;
    font-family: Roboto, sans-serif;
    font-size: 9px;
    color: #4a4d52;
    white-space: nowrap;
    overflow: hidden;
}
.bm {
    display: flex;
    align-items: center;
    flex: none;
}
.bm-icon {
    width: 11px;
    height: 11px;
    margin-right: 4px;
}

/* hubspot nav */
.topnav {
    height: 29px;
    background-color: #2d3e50;
    border-top: 1px solid #1f2b38;
    border-bottom: 1px solid #51626f;
    display: flex;
    align-items: stretch;
    color: #dfe3eb;
    font-size: 7.5px;
    white-space: nowrap;
}
.nav-item {
    display: flex;
    align-items: center;
    padding: 0 7px;
}
.nav-first {
    margin-left: -16px;
}
.active {
    background-color: #253342;
}
.chev {
    width: 3px;
    height: 3px;
    border-right: 1px solid #99acc2;
    border-bottom: 1px solid #99acc2;
    transform: rotate(45deg);
    margin-left: 3.4px;
    margin-top: -2px;
}
.nav-right {
    margin-left: auto;
    margin-right: 18px;
    display: flex;
    align-items: center;
    gap: 15px;
}
.nav-icon {
    display: block;
    width: 10px;
    height: 10px;
    color: #fff;
}
.bell {
    position: relative;
}
.badge {
    position: absolute;
    right: -5px;
    top: -5px;
    width: 9px;
    height: 9px;
    border-radius: 50%;
    background-color: #f2547d;
    color: #fff;
    font-size: 5px;
    line-height: 9px;
    text-align: center;
}

/* page */
.pipeline-row {
    display: flex;
    justify-content: space-between;
    padding-top: 15px;
    height: 46px;
}
.pipeline-left, .pipeline-right {
    display: flex;
    gap: 6px;
}
.grid-btn {
    width: 21px;
    height: 21px;
    padding: 0;
    background-color: #eaf0f6;
    border: 1px solid #cbd6e2;
    border-left: none;
    border-radius: 0 2px 2px 0;
    display: flex;
    align-items: center;
    justify-content: center;
}
.pipeline-select {
    width: 110px;
    height: 21px;
    background-color: #f5f8fa;
    border: 1px solid #cbd6e2;
    border-radius: 2px;
    padding: 0 9px 0 6px;
    display: flex;
    align-items: center;
    justify-content: space-between;
    font-size: 9.5px;
    color: #516f90;
}
.pipeline-right {
    margin-right: -40px;
}
.btn-outline {
    width: 61px;
    height: 21px;
    padding: 0;
    background-color: #fff;
    border: 1px solid #e8a898;
    border-radius: 2px;
    color: #e8836b;
    font-size: 8px;
}
.btn-import {
    width: 81px;
    text-align: left;
    padding-left: 13px;
}
.caret {
    display: inline-block;
    width: 0;
    height: 0;
    border-left: 2.5px solid transparent;
    border-right: 2.5px solid transparent;
    border-top: 3px solid #7c98b6;
    margin-left: 4px;
    vertical-align: middle;
}
.caret.teal {
    border-top-color: #00a4bd;
}
.caret.orange {
    border-top-color: #e8836b;
}
.view-tabs {
    height: 27px;
    display: flex;
    align-items: stretch;
    border-bottom: 1px solid #dfe3eb;
}
.view-tab {
    width: 70px;
    background-color: #f5f8fa;
    border: 1px solid #dfe3eb;
    border-left: none;
    border-bottom: none;
    border-radius: 0 2px 0 0;
    padding-left: 14px;
    gap: 3px;
    display: flex;
    align-items: center;
    color: #516f90;
    font-size: 8px;
}
.view-link {
    display: flex;
    align-items: center;
    gap: 6px;
    color: #2a8ea3;
    font-size: 8px;
}
.add-view {
    margin-left: 12px;
    margin-right: 24px;
}
.filters {
    display: flex;
    align-items: center;
    height: 44px;
    color: #2a8ea3;
    font-size: 8px;
    white-space: nowrap;
}
.search-box {
    width: 34px;
    height: 21px;
    border: 1px solid #dfe3eb;
    border-left: none;
    border-radius: 0 2px 2px 0;
    display: flex;
    align-items: center;
    justify-content: flex-end;
    padding-right: 7px;
    gap: 6px;
    overflow: hidden;
    flex: none;
}
.search-text {
    color: #a5b4c4;
    flex: none;
}
.search-icon {
    width: 9px;
    height: 9px;
    color: #0091ae;
    flex: none;
}
.filter {
    display: flex;
    align-items: center;
    height: 21px;
    flex: none;
    padding: 0 14px;
}
.filter-on {
    background-color: #e5f5f8;
    border-radius: 2px;
    padding: 0 5px 0 8px;
}
.f-activity {
    padding-right: 7px;
}
.f-amount {
    padding-right: 13px;
}
.f-more {
    padding-right: 7px;
}
.chip-x {
    width: 6px;
    height: 6px;
    margin-left: 5px;
}
.f-more svg {
    margin-right: 3px;
}
.table-actions {
    margin-left: auto;
    margin-right: -20px;
    width: 96px;
    height: 21px;
    text-align: left;
    padding: 0 0 0 13px;
    background-color: #eaf0f6;
    border: 1px solid #cbd6e2;
    border-radius: 2px;
    color: #516f90;
    font-size: 8px;
}

/* deals table */
.deals {
    margin-left: -90px;
    width: 1500px;
    border-bottom: 1px solid #dfe3eb;
    font-size: 7.9px;
}
.row {
    display: grid;
    grid-template-columns: 196px 110px 109px 109px 170px 165px 109px 109px 110px 110px 193px;
    height: 21.93px;
    padding-top: 3px;
    border-bottom: 1px solid #e5eaf0;
    align-items: center;
    white-space: nowrap;
}
.row-first {
    background-color: #fbfcfd;
}
.row-hover {
    background-color: #f9fafb;
}
.head {
    height: 25px;
    padding-top: 0;
    background-color: #f5f8fa;
    border-top: 1px solid #eaf0f6;
    border-bottom: 1px solid #dfe3eb;
    font-size: 6.8px;
    color: #33475b;
    text-transform: uppercase;
    align-items: stretch;
}
.th {
    display: flex;
    align-items: center;
    justify-content: space-between;
    padding: 0 13px 1px 16px;
    border-right: 1px solid #eef2f6;
}
.th-sorted {
    background-color: #eaf0f6;
}
.sort {
    display: block;
    width: 4px;
    height: 8px;
    position: relative;
}
.sort::before, .sort::after {
    content: "";
    position: absolute;
    left: 0;
    border-left: 2px solid transparent;
    border-right: 2px solid transparent;
}
.sort::before {
    top: 0;
    border-bottom: 3px solid #cbd6e2;
}
.sort::after {
    bottom: 0;
    border-top: 3px solid #cbd6e2;
}
.sort-down::after {
    border-top-color: #00a4bd;
}
.td {
    padding: 0 13px;
    overflow: hidden;
}
.name {
    padding-left: 41px;
    color: #2a8ea3;
    position: relative;
    overflow: visible;
    font-weight: 700;
    font-size: 8.2px;
}
.preview {
    position: absolute;
    left: 146px;
    top: 50%;
    margin-top: -7px;
    width: 37px;
    height: 14px;
    background-color: #eaf0f6;
    border: 1px solid #cbd6e2;
    border-radius: 2px;
    color: #7c98b6;
    font-weight: 400;
    font-size: 6.5px;
    line-height: 12px;
    text-align: center;
}
.amount {
    text-align: right;
}
.muted {
    color: #8a99a8;
}
.owner, .assoc {
    display: flex;
    align-items: center;
    gap: 6px;
}
.avatar, .logo {
    width: 14px;
    height: 14px;
    flex: none;
}
.link {
    color: #2a8ea3;
    font-weight: 700;
    font-size: 8.1px;
}
.owner .link {
    font-size: 8.3px;
}
.link.muted {
    color: #8a99a8;
    font-weight: 400;
}
.logo-blank {
    border-radius: 50%;
    background-color: #f0f3f7;
}
.logo-b {
    border-radius: 50%;
    background-color: #7c98b6;
    color: #dfe3eb;
    font-size: 6px;
    line-height: 14px;
    text-align: center;
}
.logo-e {
    color: #e8843c;
    font-size: 13px;
    line-height: 14px;
    text-align: center;
}
.logo-neo {
    color: #444;
    font-family: "Liberation Serif", serif;
    font-size: 6px;
    line-height: 14px;
    text-align: center;
}

/* pager */
.pager {
    display: flex;
    align-items: center;
    margin-top: 12px;
    height: 16px;
    padding-left: 559px;
    font-size: 8px;
    color: #b3c1d0;
}
.pager-arrow {
    width: 6px;
    height: 10px;
}
.pager-off {
    margin: 0 4px 0 8px;
}
.pager-next {
    margin: 0 10px 0 4px;
}
.pager-num {
    width: 12px;
    height: 14px;
    line-height: 12px;
    text-align: center;
    background-color: #e5f5f8;
    border: 1px solid #7fd1de;
    border-radius: 2px;
    color: #2a8ea3;
}
.per-page {
    margin-left: 24px;
    color: #2a8ea3;
    display: flex;
    align-items: center;
    font-size: 8.2px;
    font-weight: 700;
}
.cursor {
    position: absolute;
    left: 148px;
    top: 302px;
}
```
